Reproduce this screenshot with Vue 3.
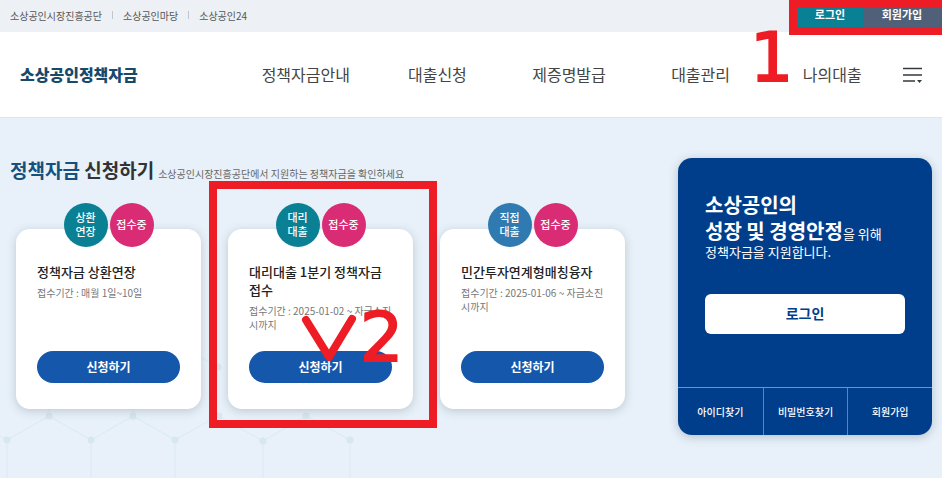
<script setup>
const sites = ['소상공인시장진흥공단', '소상공인마당', '소상공인24']
const menus = ['정책자금안내', '대출신청', '제증명발급', '대출관리', '나의대출']
const loans = [
  { kind: ['상환', '연장'], tone: 'teal', title: '정책자금 상환연장', period: '접수기간 : 매월 1일~10일' },
  { kind: ['대리', '대출'], tone: 'teal', title: '대리대출 1분기 정책자금 접수', period: '접수기간 : 2025-01-02 ~ 자금소진시까지', marked: true },
  { kind: ['직접', '대출'], tone: 'blue', title: '민간투자연계형매칭융자', period: '접수기간 : 2025-01-06 ~ 자금소진시까지' }
]
const helps = ['아이디찾기', '비밀번호찾기', '회원가입']
</script>

<template>
  <div class="page">
    <div class="topbar">
      <ul class="sites">
        <li v-for="s in sites" :key="s"><a href="#">{{ s }}</a></li>
      </ul>
      <div class="account">
        <button type="button" class="login">로그인</button>
        <button type="button" class="join">회원가입</button>
        <div class="mark-box account-box"></div>
        <span class="mark-num num-one">1</span>
      </div>
    </div>

    <header class="header">
      <a href="#" class="logo">소상공인정책자금</a>
      <nav class="nav">
        <a v-for="m in menus" :key="m" href="#">{{ m }}</a>
      </nav>
      <button type="button" class="menu" aria-label="전체메뉴">
        <svg width="20" height="20" viewBox="0 0 20 20">
          <path d="M0 5.500H19M0 12H19M0 18H12" stroke="#333a40" stroke-width="1.500" fill="none" />
          <path d="M14 17H19L16.500 20Z" fill="#333a40" />
        </svg>
      </button>
    </header>

    <main class="main">
      <svg class="pattern" width="360" height="360" viewBox="0 118 360 360">
        <g fill="none" stroke="#dbe9f2" stroke-width="1">
          <path d="M0 436L7 440L49 416L91 440L133 416L175 440L218 416L263 441L306 416L350 440" />
          <path d="M7 440V478M91 440V478M175 440V478M263 441V478M350 440V478M49 416V360M133 416V360M218 367L175 343" />
        </g>
        <g fill="#d7e7f0">
          <circle cx="7" cy="440" r="3.500" /><circle cx="49" cy="416" r="3.500" />
          <circle cx="91" cy="440" r="3.500" /><circle cx="133" cy="416" r="3.500" />
          <circle cx="175" cy="440" r="3.500" /><circle cx="219" cy="416" r="3.500" />
          <circle cx="263" cy="441" r="3.500" /><circle cx="306" cy="416" r="3.500" />
          <circle cx="350" cy="440" r="3.500" /><circle cx="218" cy="367" r="3.500" />
        </g>
      </svg>

      <section class="apply">
        <div class="heading">
          <h1><em>정책자금</em> 신청하기</h1>
          <p>소상공인시장진흥공단에서 지원하는 정책자금을 확인하세요</p>
        </div>
        <div class="cards">
          <article v-for="l in loans" :key="l.title" class="card">
            <div class="badges">
              <span class="badge" :class="l.tone">{{ l.kind[0] }}<br>{{ l.kind[1] }}</span>
              <span class="badge pink">접수중</span>
            </div>
            <h2>{{ l.title }}</h2>
            <p>{{ l.period }}</p>
            <button type="button">신청하기</button>
            <template v-if="l.marked">
              <div class="mark-box card-box"></div>
              <svg class="check" width="60" height="52" viewBox="0 0 60 52">
                <path d="M6 8L29 45L52 7" fill="none" stroke="#ee1c25" stroke-width="8" stroke-linecap="round" stroke-linejoin="round" />
              </svg>
              <span class="mark-num num-two">2</span>
            </template>
          </article>
        </div>
      </section>

      <aside class="panel">
        <div class="panel-body">
          <p class="slogan">소상공인의<br>성장 및 경영안정<span>을 위해</span></p>
          <p class="support">정책자금을 지원합니다.</p>
          <button type="button">로그인</button>
        </div>
        <ul class="helps">
          <li v-for="h in helps" :key="h"><a href="#">{{ h }}</a></li>
        </ul>
      </aside>
    </main>
  </div>
</template>

<style>
body {
  background: #e8f1f9;
}
</style>

<style scoped>
* {
  box-sizing: border-box;
  margin: 0;
  padding: 0;
}
.page {
  display: flex;
  flex-direction: column;
  min-height: 100vh;
  overflow: hidden;
  font-family: "Noto Sans CJK KR", sans-serif;
  color: #333;
}
a {
  color: inherit;
  text-decoration: none;
}
ul {
  list-style: none;
}
button {
  padding-bottom: 2px;
  border: 0;
  font-family: inherit;
  cursor: pointer;
}
.topbar {
  display: flex;
  justify-content: space-between;
  height: 32px;
  background: #edf1f5;
}
.sites {
  display: flex;
  align-items: center;
  padding: 0 0 2px 10px;
  font-size: 10px;
  color: #555;
}
.sites li {
  display: flex;
  align-items: center;
}
.sites li + li::before {
  content: "";
  width: 1px;
  height: 8px;
  margin: 0 10px;
  background: #c0c6d0;
}
.account {
  position: relative;
  display: flex;
  padding-right: 1px;
}
.account button {
  padding-bottom: 4px;
  color: #fff;
  font-size: 11px;
  font-weight: 700;
}
.account .login {
  width: 66px;
  background: #0a8095;
}
.account .join {
  width: 78px;
  background: #4f6078;
}
.mark-box {
  position: absolute;
  border: 8px solid #ee1c25;
  pointer-events: none;
}
.account-box {
  inset: 0 -7px -3px -8px;
}
.mark-num {
  position: absolute;
  color: #ee1c25;
  font-family: "DejaVu Sans", sans-serif;
  font-size: 68px;
  line-height: 68px;
  -webkit-text-stroke: 2px #ee1c25;
  pointer-events: none;
}
.num-one {
  left: -47px;
  top: 24px;
}
.header {
  display: flex;
  align-items: center;
  height: 86px;
  padding-bottom: 2px;
  background: #fff;
  border-bottom: 1px solid #e2e5e8;
}
.logo {
  width: 240px;
  padding-left: 20px;
  color: #17496b;
  font-size: 16px;
  font-weight: 900;
}
.nav {
  flex: 1;
  display: grid;
  grid-template-columns: repeat(5, 1fr);
  text-align: center;
  font-size: 16px;
  color: #444;
}
.menu {
  display: flex;
  width: 44px;
  padding-left: 5px;
  background: none;
}
.main {
  position: relative;
  flex: 1;
  display: flex;
  align-items: flex-start;
  justify-content: space-between;
  gap: 53px;
  padding: 40px 10px;
  background: #e8f1f9;
}
.pattern {
  position: absolute;
  left: 0;
  top: 0;
}
.apply {
  position: relative;
  flex: 1;
}
.heading {
  display: flex;
  align-items: baseline;
  gap: 4px;
  height: 71px;
  white-space: nowrap;
}
.heading h1 {
  font-size: 19px;
  font-weight: 700;
  line-height: 24px;
}
.heading em {
  font-style: normal;
  color: #17507c;
}
.heading p {
  font-size: 10px;
  color: #666;
}
.cards {
  display: grid;
  grid-template-columns: repeat(3, 1fr);
  gap: 27px;
  padding-left: 6px;
}
.card {
  position: relative;
  display: flex;
  flex-direction: column;
  min-height: 180px;
  padding: 34px 21px 26px;
  border-radius: 14px;
  background: #fff;
  box-shadow: 0 2px 10px rgba(60, 80, 100, 0.25);
}
.badges {
  position: absolute;
  top: -26px;
  left: 0;
  right: 0;
  display: flex;
  justify-content: center;
  gap: 2px;
}
.badge {
  display: flex;
  align-items: center;
  justify-content: center;
  width: 44px;
  height: 44px;
  padding-bottom: 2px;
  border-radius: 50%;
  color: #fff;
  font-size: 11px;
  font-weight: 500;
  line-height: 14px;
}
.teal {
  background: #0a8095;
}
.blue {
  background: #2f7bb1;
}
.pink {
  background: #da2c74;
}
.card h2 {
  color: #222;
  font-size: 13px;
  font-weight: 500;
  line-height: 18px;
}
.card p {
  margin: 5px 0 auto;
  color: #777;
  font-size: 10px;
  line-height: 14px;
}
.card button {
  height: 32px;
  border-radius: 16px;
  background: #1457ab;
  color: #fff;
  font-size: 12px;
  font-weight: 700;
}
.card-box {
  inset: -48px -24px -19px -19px;
}
.check {
  position: absolute;
  left: 72px;
  top: 83px;
}
.num-two {
  left: 132px;
  top: 75px;
}
.panel {
  position: relative;
  width: 254px;
  border-radius: 14px;
  background: #003e8c;
  color: #fff;
  box-shadow: 0 2px 10px rgba(60, 80, 100, 0.3);
}
.panel-body {
  padding: 34px 27px 53px;
}
.slogan {
  font-size: 20px;
  font-weight: 700;
  line-height: 26px;
  white-space: nowrap;
}
.slogan span {
  font-size: 13px;
  font-weight: 400;
  line-height: 16px;
}
.support {
  font-size: 13px;
  line-height: 16px;
}
.panel-body button {
  width: 100%;
  height: 40px;
  margin-top: 34px;
  border-radius: 6px;
  background: #fff;
  color: #003e8c;
  font-size: 14px;
  font-weight: 700;
}
.helps {
  display: grid;
  grid-template-columns: repeat(3, 1fr);
  border-top: 1px solid #6f94c0;
  text-align: center;
  font-size: 10px;
  font-weight: 500;
  line-height: 47px;
}
.helps li + li {
  border-left: 1px solid #5c85b7;
}
</style>
